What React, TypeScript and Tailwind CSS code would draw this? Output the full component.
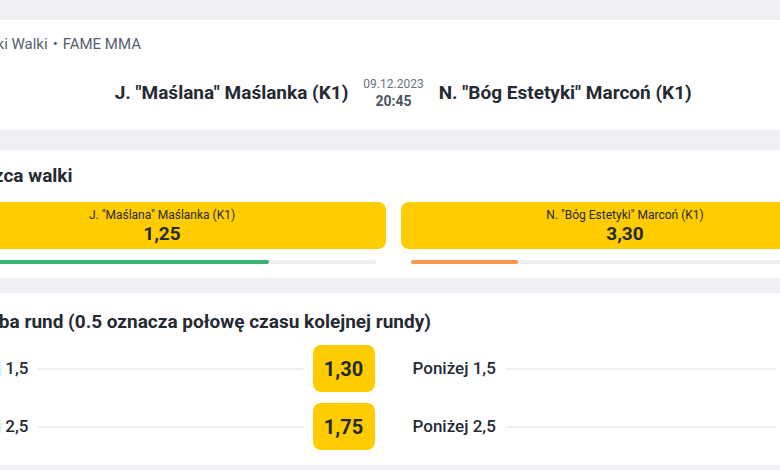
import React from 'react';

const winner = [
  { name: 'J. "Maślana" Maślanka (K1)', odds: '1,25', pct: 75, bar: 'bg-[#36b471]' },
  { name: 'N. "Bóg Estetyki" Marcoń (K1)', odds: '3,30', pct: 25, bar: 'bg-[#f6994c]' },
];

const rounds = [
  { over: '1,5', overOdds: '1,30', underOdds: '2,95' },
  { over: '2,5', overOdds: '1,75', underOdds: '1,95' },
];

function OddsRow({ label, odds }: { label: string; odds: string }) {
  return (
    <div className="flex items-center h-[47px]">
      <span className="text-[17px] font-medium text-[#252a33] whitespace-nowrap">{label}</span>
      <div className="flex-1 h-[2px] bg-[#eef0f4] mx-[10px]" />
      <button className="w-[62px] h-[47px] rounded-lg bg-[#ffcc00] text-[20px] font-bold text-[#252a33]">
        {odds}
      </button>
    </div>
  );
}

export default function App() {
  return (
    <div className="w-[780px] h-[470px] overflow-hidden bg-[#eef0f3] font-['Roboto',sans-serif]">
      <div className="ml-[-78px] w-[943px] pt-[20px] flex flex-col">
        {/* match header */}
        <div className="bg-white h-[110px] px-4 pt-4">
          <div className="text-[15px] leading-4 text-[#556070] ml-[29px] whitespace-nowrap">
            Sztuki Walki<span className="mx-[5px]">•</span>FAME MMA
          </div>
          <div className="grid grid-cols-[1fr_auto_1fr] gap-[15px] items-center mt-[22px] h-[38px]">
            <div className="text-right text-[19px] font-bold text-[#252a33]">J. "Maślana" Maślanka (K1)</div>
            <div className="flex flex-col items-center">
              <span className="text-[12px] leading-4 text-[#6b7280]">09.12.2023</span>
              <span className="text-[14px] leading-[18px] font-bold text-[#4b5563]">20:45</span>
            </div>
            <div className="text-[19px] font-bold text-[#252a33]">N. "Bóg Estetyki" Marcoń (K1)</div>
          </div>
        </div>

        {/* winner */}
        <div className="bg-white mt-[20px] px-4 pt-[14px] pb-[14px]">
          <h2 className="text-[19px] leading-6 font-bold text-[#252a33] ml-[-4px]">Zwycięzca walki</h2>
          <div className="grid grid-cols-2 gap-[15px] mt-[14px]">
            {winner.map((w) => (
              <div key={w.odds}>
                <button className="w-full h-[47px] rounded-lg bg-[#ffcc00] flex flex-col items-center justify-center text-[#252a33]">
                  <span className="text-[12px] leading-4">{w.name}</span>
                  <span className="text-[19px] leading-[22px] font-bold">{w.odds}</span>
                </button>
                <div className="mx-[10px] mt-[11px] h-1 rounded-full bg-[#eef0f4]">
                  <div className={`h-1 rounded-full ${w.bar}`} style={{ width: `${w.pct}%` }} />
                </div>
              </div>
            ))}
          </div>
        </div>

        {/* rounds */}
        <div className="bg-white mt-[15px] px-4 pt-[17px] pb-[15px]">
          <h2 className="text-[19px] leading-6 font-bold text-[#252a33] ml-[26px] whitespace-nowrap">
            Liczba rund (0.5 oznacza połowę czasu kolejnej rundy)
          </h2>
          <div className="grid grid-cols-2 gap-x-[38px] gap-y-[11px] mt-[11px]">
            {rounds.map((r) => (
              <React.Fragment key={r.over}>
                <OddsRow label={`Powyżej ${r.over}`} odds={r.overOdds} />
                <OddsRow label={`Poniżej ${r.over}`} odds={r.underOdds} />
              </React.Fragment>
            ))}
          </div>
        </div>
      </div>
    </div>
  );
}
